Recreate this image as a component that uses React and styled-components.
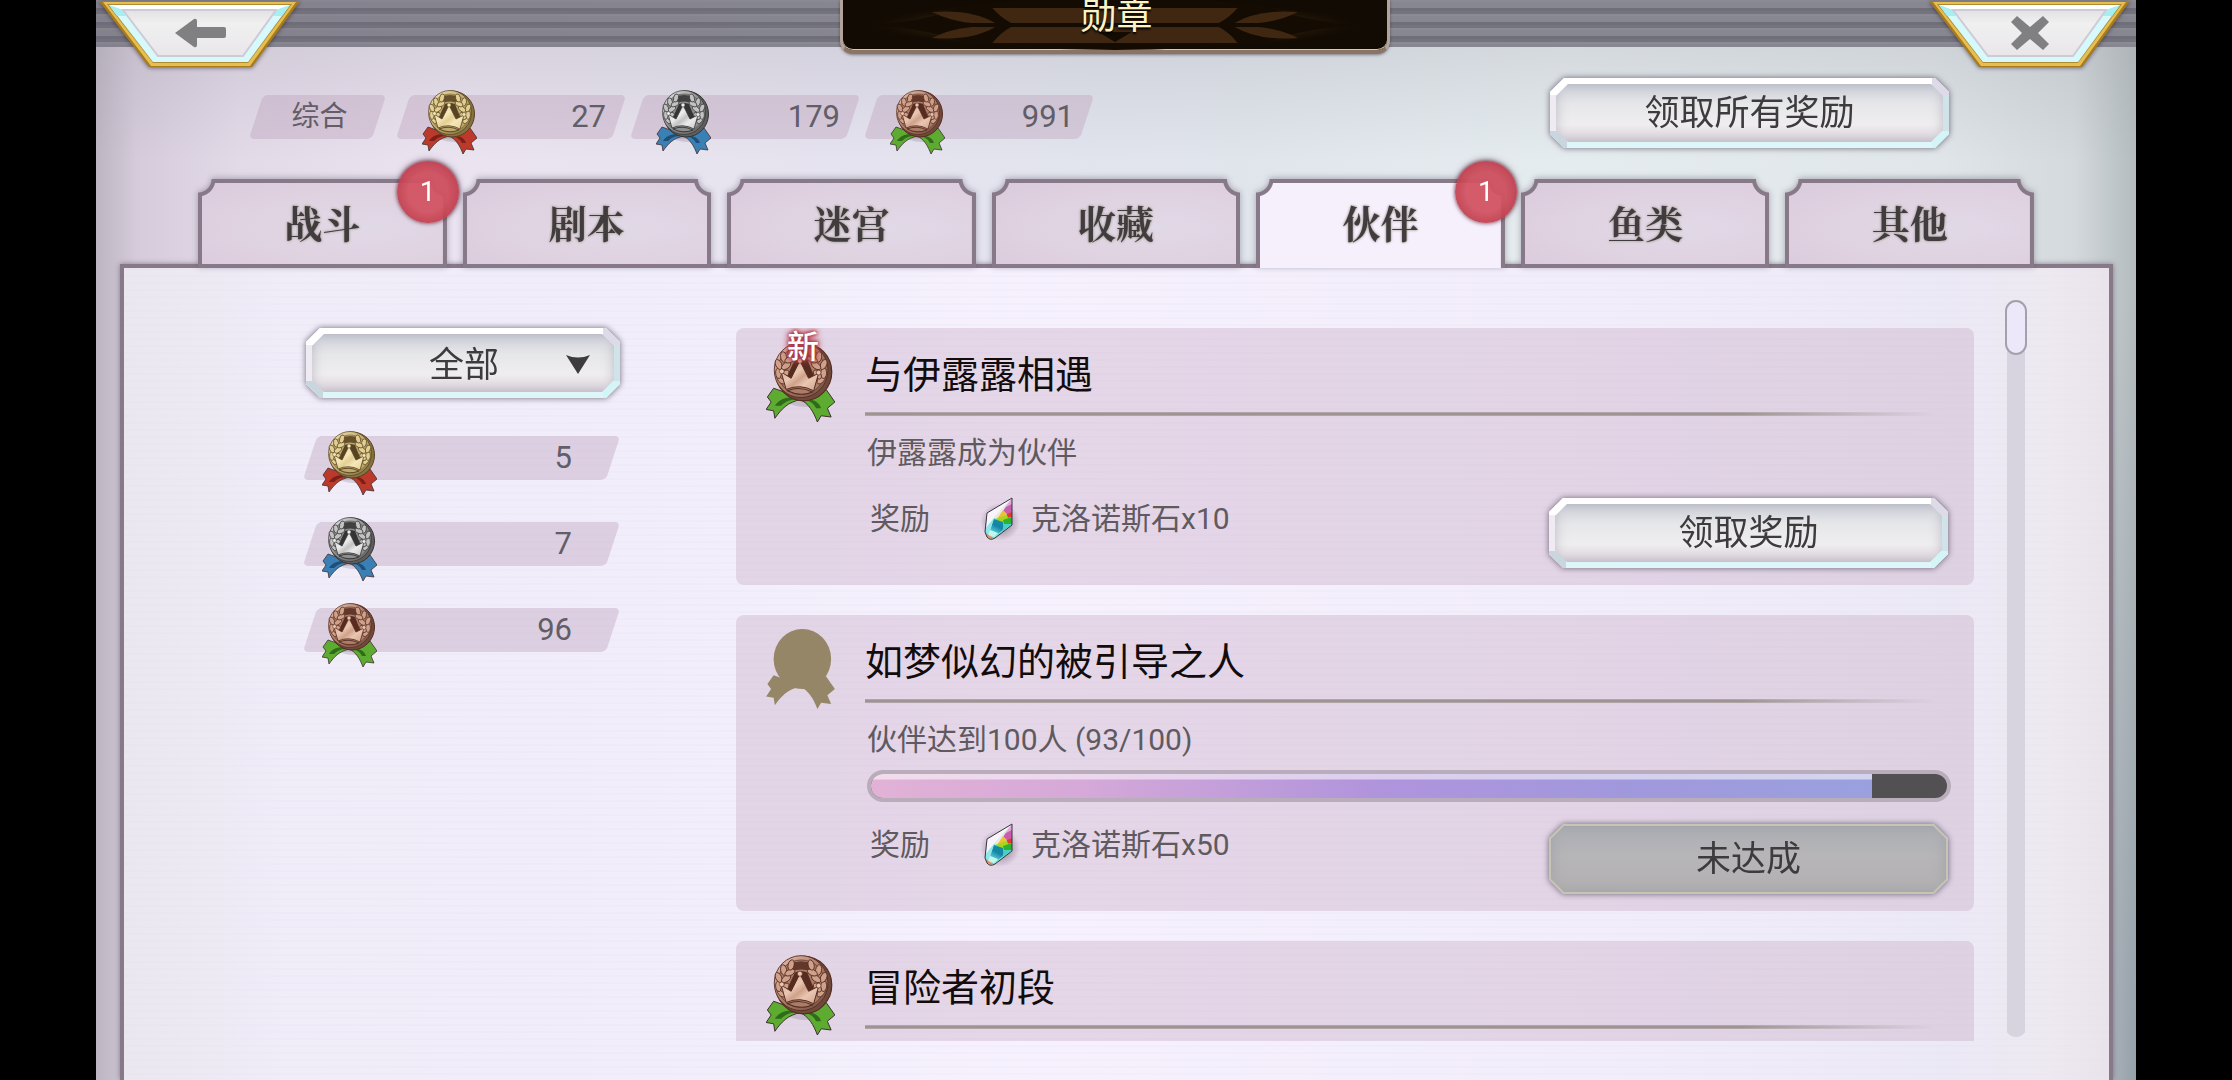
import React, { useId, useState } from "react";
import styled, { createGlobalStyle, css } from "styled-components";

const sans = `Roboto, "Noto Sans CJK SC", sans-serif`;
const serif = `"Noto Serif CJK SC", "Noto Sans CJK SC", serif`;
const edge = "#877987";

const GlobalStyle = createGlobalStyle`
  *, *::before, *::after { box-sizing: border-box; }
  body { margin: 0; background: #000; font-family: ${sans}; color: #5f5b60; }
  button, select { font: inherit; color: inherit; margin: 0; padding: 0; border: 0; background: none; cursor: pointer; }
  h1, h2, p, ul { margin: 0; padding: 0; font-weight: 400; }
  ul { list-style: none; }
`;

const Stage = styled.div`
  height: 100vh;
  margin: 0 96px;
  display: flex;
  flex-direction: column;
  overflow: hidden;
  background:
    radial-gradient(ellipse 60px 800px at 100% 100%, rgba(130, 142, 155, 0.6), transparent),
    linear-gradient(to bottom, rgba(150, 150, 160, 0.22) 47px, transparent 160px),
    linear-gradient(to right, #bdb5c2 0, #d5cbda 2%, #e3dae8 7%, #ebe3f0 17%, #e5e3ef 38%, #e0e5ec 56%, #e5ecef 72%, #e0e6e9 90%, #d3d9dc 97%, #b4bcbf 100%);
`;

const TopBar = styled.header`
  height: 47px;
  flex: none;
  display: flex;
  justify-content: space-between;
  align-items: flex-start;
  padding: 0 6px 0 3px;
  background:
    linear-gradient(to right, rgba(110, 95, 115, 0.14), transparent 50%),
    repeating-linear-gradient(to bottom, #8b8b95 0 2px, #878791 2px 8px, #6f6f7a 8px 11px, #74747e 11px 14px);
`;

const CornerButton = styled.button`
  width: 201px;
  height: 70px;
  filter: drop-shadow(0 1px 2px rgba(40, 30, 50, 0.6));
  svg { display: block; }
`;

const TitlePlate = styled.div`
  position: relative;
  width: 550px;
  height: 54px;
  border: solid #b3a49b;
  border-width: 0 3px 4px;
  border-bottom-color: #8b7462;
  border-radius: 0 0 13px 13px;
  background: #120b03;
  box-shadow: inset 0 -1px 0 #d8c8bc, 0 1px 3px rgba(40, 30, 40, 0.5);
  svg { position: absolute; inset: 0; width: 100%; height: 100%; }
`;

const Title = styled.h1`
  position: relative;
  font-size: 36px;
  line-height: 34px;
  padding-left: 4px;
  text-align: center;
  color: #fbf3c6;
  text-shadow: 0 2px 2px #000;
`;

const Summary = styled.div`
  flex: none;
  height: 132px;
  display: flex;
  justify-content: space-between;
  align-items: center;
  padding: 0 187px 0 153px;
`;

const Totals = styled.div`
  display: flex;
  gap: 4px;
  padding-top: 8px;
`;

const Chip = styled.div`
  position: relative;
  z-index: 0;
  width: ${(p) => p.$width};
  height: 44px;
  display: flex;
  align-items: center;
  justify-content: ${(p) => (p.$label ? "center" : "space-between")};
  margin-right: ${(p) => (p.$label ? "6px" : "0")};
  padding: ${(p) => (p.$label ? "0 0 0 4px" : p.$wide ? "0 48px 0 19px" : "0 20px 0 26px")};
  font-size: ${(p) => (p.$label ? "28px" : "31px")};
  line-height: 44px;
  color: #625d66;
  svg { margin-top: 10px; }
  &::before {
    content: "";
    position: absolute;
    z-index: -1;
    inset: 0 7px;
    border-radius: 5px;
    background: rgba(185, 155, 182, 0.36);
    transform: skewX(-18deg);
  }
`;

/* chamfered, bevelled plate shared by buttons and the filter */
const octagon = (x, y) => `polygon(${x}px 0, calc(100% - ${x}px) 0, 100% ${y}px, 100% calc(100% - ${y}px), calc(100% - ${x}px) 100%, ${x}px 100%, 0 calc(100% - ${y}px), 0 ${y}px)`;

const plate = css`
  position: relative;
  z-index: 0;
  height: 70px;
  font-size: 35px;
  line-height: 72px;
  color: #3d3b3e;
  filter: drop-shadow(0 0 3px rgba(70, 60, 80, 0.75));
  &::before, &::after { content: ""; position: absolute; z-index: -1; }
  &::before {
    inset: 0;
    clip-path: ${octagon(14, 14)};
    background:
      linear-gradient(#fff, #fff) left top / 17px 17px no-repeat,
      linear-gradient(#dedae7, #dedae7) right top / 17px 17px no-repeat,
      linear-gradient(#c9d6de, #c9d6de) left bottom / 17px 17px no-repeat,
      linear-gradient(#d3f5f8, #d3f5f8) right bottom / 17px 17px no-repeat,
      linear-gradient(#f0eaf3, #f0eaf3) left / 8px 100% no-repeat,
      linear-gradient(#cfe3e9, #cfe3e9) right / 8px 100% no-repeat,
      linear-gradient(#fff 50%, #dcf6f9 50%);
  }
  &::after {
    inset: 6px;
    clip-path: ${octagon(12, 12)};
    background: linear-gradient(#cdd0d9, #e6e7e9 35%, #efedef 70%, #dbd3db);
    box-shadow: inset 0 0 12px rgba(150, 145, 165, 0.55);
  }
`;

const PlateButton = styled.button`
  ${plate}
  width: 399px;
  flex: none;
  &:disabled { cursor: default; }
  &:disabled::before { background: #c5c5b5; }
  &:disabled::after {
    inset: 2px;
    clip-path: ${octagon(13, 13)};
    background: linear-gradient(#adafb4, #b6b5b8 45%, #b4b0b2);
    box-shadow: inset 0 0 14px rgba(145, 150, 155, 0.6);
  }
`;

const Filter = styled.label`
  ${plate}
  display: block;
  width: 314px;
  align-self: flex-end;
  margin-bottom: 38px;
  select {
    width: 100%;
    height: 70px;
    padding: 2px 0 0 2px;
    appearance: none;
    text-align-last: center;
    outline: none;
  }
  svg { position: absolute; right: 30px; top: 27px; pointer-events: none; }
`;

const Tabs = styled.nav`
  position: relative;
  z-index: 1;
  flex: none;
  display: flex;
  gap: 16px;
  margin: 0 23px -4px 24px;
  padding: 0 79px 0 78px;
`;

const notch = (at, r) => css`
  mask:
    radial-gradient(circle at -${at}px -${at}px, #0000 ${r}px, #000 ${r + 1}px) left / 51% 100% no-repeat,
    radial-gradient(circle at calc(100% + ${at}px) -${at}px, #0000 ${r}px, #000 ${r + 1}px) right / 51% 100% no-repeat;
`;

const Tab = styled.button`
  position: relative;
  z-index: 0;
  flex: 1;
  height: 89px;
  padding-bottom: 4px;
  font-family: ${serif};
  font-size: 38px;
  font-weight: 700;
  line-height: 85px;
  color: #413d3e;
  text-shadow: 0 0 3px #a39a94, 0 0 2px #b5aca6;
  filter: drop-shadow(0 -1px 3px rgba(80, 70, 90, 0.4));
  &::before, &::after { content: ""; position: absolute; z-index: -1; }
  &::before { inset: 0; background: ${edge}; ${notch(0, 13)} }
  &::after {
    inset: 4px 4px ${(p) => (p.$active ? "0" : "4px")};
    background: ${(p) => (p.$active
      ? "#f5f0fc"
      : "radial-gradient(ellipse at 65% 55%, #e1d9e7, #dfd1e0 60%, #dacbdc)")};
    ${notch(4, 17)}
  }
`;

const Badge = styled.span`
  position: absolute;
  top: -18px;
  right: -12px;
  width: 62px;
  height: 62px;
  border-radius: 50%;
  background: radial-gradient(circle, rgba(210, 82, 96, 0.94) 45%, rgba(194, 64, 80, 0.94) 70%);
  box-shadow: 0 0 4px rgba(90, 20, 40, 0.9);
  font-family: ${sans};
  font-size: 28px;
  font-weight: 400;
  line-height: 62px;
  color: #fff;
  text-shadow: none;
`;

const Panel = styled.main`
  flex: 1;
  min-height: 0;
  margin: 0 23px 0 24px;
  border: 4px solid ${edge};
  border-bottom: 0;
  display: flex;
  padding: 32px 82px 0 179px;
  box-shadow: 0 0 5px rgba(70, 60, 80, 0.55);
  background:
    repeating-linear-gradient(to bottom, rgba(225, 220, 240, 0.16) 0 2px, transparent 2px 7px),
    linear-gradient(to right, #ebe7ef 0, #f0ecf8 8%, #f1edfa 25%, #f6f1fd 45%, #f2edfa 75%, #ece9f6 92%, #eee9f1 97%, #e9e4ea 100%);
`;

const Sidebar = styled.aside`
  flex: none;
  width: 317px;
  margin-right: 116px;
  padding-top: 28px;
  display: flex;
  flex-direction: column;
`;

const Counts = styled.div`
  display: grid;
  gap: 42px;
`;

const List = styled.ul`
  flex: 1;
  min-width: 0;
  margin: 28px 0 39px;
  overflow: hidden;
  display: flex;
  flex-direction: column;
  gap: 30px;
`;

const Card = styled.li`
  flex: none;
  min-height: 257px;
  display: flex;
  padding: 14px 26px 17px 30px;
  border-radius: 8px;
  background: rgba(185, 150, 180, 0.29);
`;

const MedalSlot = styled.div`
  position: relative;
  flex: none;
  width: 99px;
`;

const NewMark = styled.span`
  position: absolute;
  top: -13px;
  left: 21px;
  font-size: 32px;
  font-weight: 500;
  line-height: 36px;
  color: #fff;
  text-shadow: 0 0 3px #a8303c, 0 0 4px #b83844, 0 0 6px #b83844, 0 0 8px #c45a64;
`;

const CardBody = styled.div`
  flex: 1;
  min-width: 0;
  display: flex;
  flex-direction: column;
`;

const CardTitle = styled.h2`
  font-size: 38px;
  line-height: 66px;
  color: #120c0c;
`;

const Rule = styled.div`
  height: 4px;
  margin: 4px 14px 16px 0;
  background: linear-gradient(#b9adb2, #968b89 50%, #b9adb2);
  mask: linear-gradient(to right, #000 82%, transparent);
`;

const Description = styled.p`
  padding-left: 2px;
  font-size: 30px;
  line-height: 42px;
  color: #5f5a60;
`;

const Progress = styled.div`
  height: 32px;
  margin: 9px -3px 0 2px;
  border: 4px solid #b9adbb;
  border-radius: 16px;
  background: #535053;
  overflow: hidden;
`;

const ProgressFill = styled.div`
  height: 100%;
  background:
    linear-gradient(rgba(255, 255, 255, 0.55) 0 5px, transparent 6px),
    linear-gradient(to right, #e2b2d6, #d4a8d8 22%, #b094dc 50%, #a198dc 75%, #9aa0de);
`;

const CardFooter = styled.div`
  margin-top: auto;
  padding-top: 22px;
  display: flex;
  justify-content: space-between;
  align-items: flex-start;
`;

const Reward = styled.p`
  display: flex;
  align-items: center;
  gap: 18px;
  padding-left: 5px;
  font-size: 30px;
  line-height: 38px;
  color: #5f5a60;
  span:first-child { margin-right: 37px; }
`;

const ScrollTrack = styled.div`
  flex: none;
  width: 22px;
  margin: 0 0 43px 31px;
  background: linear-gradient(#d7d4e0, #d7d4e0) center / 18px 100% no-repeat;
  border-radius: 11px;
`;

const ScrollThumb = styled.div`
  height: 55px;
  border: 2px solid #a5a0ac;
  border-radius: 11px;
  background: #ece8fa;
`;

const TONES = {
  gold: { light: "#f6e7b8", leaf: "#e2cf92", mid: "#bfa96c", dark: "#574222", rim: "#85723f", ribbon: "#bb3a2c", fold: "#7c1f18" },
  silver: { light: "#ececec", leaf: "#c2c2c2", mid: "#8f8f8f", dark: "#343434", rim: "#5e5e5e", ribbon: "#3a80b4", fold: "#1e4f78" },
  bronze: { light: "#eac6b2", leaf: "#cfa18a", mid: "#ab7d69", dark: "#562c20", rim: "#6f493c", ribbon: "#5dab30", fold: "#2f6b18" },
};

const LEFT_RIBBON = "M20 42 L6 37 L1 44 L4 48 L0 54 L6 55 L7 61 C12 54 17 48 28 46 Z";
const RIGHT_RIBBON = "M33 43 L48 38 L55 48 L49 53 L52 60 L44 59 L41 64 C38 56 34 49 27 46 Z";
const LEAVES = [
  [12, 30, -40], [10, 25, -5], [15, 26, 40], [10, 18, -25], [16, 19, 55], [14, 12, -10], [19, 14, 65], [20, 8, 15],
];

function Medal({ tone, width = 55 }) {
  const id = useId();
  const height = Math.round((width * 64) / 55);
  if (tone === "locked") {
    return (
      <svg width={width} height={height} viewBox="0 0 55 64" fill="#958667" aria-hidden="true">
        <ellipse cx="29" cy="24" rx="23" ry="24" />
        <path d={LEFT_RIBBON} />
        <path d={RIGHT_RIBBON} />
      </svg>
    );
  }
  const c = TONES[tone];
  return (
    <svg width={width} height={height} viewBox="0 0 55 64" aria-hidden="true">
      <defs>
        <linearGradient id={`${id}d`} x1="0" y1="0" x2="1" y2="1">
          <stop offset="0" stopColor={c.light} />
          <stop offset=".5" stopColor={c.mid} />
          <stop offset="1" stopColor={c.rim} />
        </linearGradient>
        <linearGradient id={`${id}c`} x1="0" y1="0" x2="1" y2="1">
          <stop offset="0" stopColor={c.leaf} />
          <stop offset=".4" stopColor={c.light} />
          <stop offset=".55" stopColor={c.leaf} />
          <stop offset=".7" stopColor={c.light} />
          <stop offset="1" stopColor={c.leaf} />
        </linearGradient>
      </defs>
      <ellipse cx="32" cy="46" rx="16" ry="6" fill="#443848" opacity=".16" />
      <g stroke="#3f3030" strokeWidth=".8" strokeLinejoin="round">
        <path d={LEFT_RIBBON} fill={c.ribbon} />
        <path d={RIGHT_RIBBON} fill={c.ribbon} />
      </g>
      <path d="M25 45 C17 43 10 46 7 51 L12 51 C16 47 20 46 25 46 Z" fill={c.fold} />
      <path d="M30 46 C36 45 42 47 44 53 L40 53 C38 49 35 47 30 46 Z" fill={c.fold} />
      <ellipse cx="30" cy="24" rx="22.500" ry="23" fill={c.rim} stroke={c.dark} strokeWidth="1" />
      <ellipse cx="28" cy="22.500" rx="21.500" ry="22" fill={`url(#${id}d)`} stroke={c.dark} strokeWidth=".7" />
      <circle cx="28" cy="23" r="19" fill={c.mid} stroke={c.rim} strokeWidth=".8" />
      <path d="M19 7 Q28 3 37 7 L36 13 Q28 10 20 13 Z" fill={c.dark} opacity=".85" />
      <path d="M23 14 Q28 12 33 14 L39 29 L16 29 Z" fill={c.dark} />
      <g fill={c.leaf} stroke={c.dark} strokeWidth=".7">
        {LEAVES.map(([x, y, a]) => (
          <ellipse key={`l${x}-${y}`} cx={x} cy={y} rx="2.400" ry="4.200" transform={`rotate(${a} ${x} ${y})`} />
        ))}
        {LEAVES.map(([x, y, a]) => (
          <ellipse key={`r${x}-${y}`} cx={56 - x} cy={y} rx="2.400" ry="4.200" transform={`rotate(${-a} ${56 - x} ${y})`} />
        ))}
      </g>
      <path
        d="M16 38 L12 24 L20 29 L27 15 L34 29 L42 25 L38 39 Q27 33 16 38 Z"
        fill={`url(#${id}c)`} stroke={c.dark} strokeWidth=".8" strokeLinejoin="round"
      />
      <path d="M17 39 Q27 35 37 40 Q27 44 17 39 Z" fill={c.mid} stroke={c.dark} strokeWidth=".9" />
      <g fill={c.light} stroke={c.dark} strokeWidth=".5">
        <circle cx="27" cy="15" r="2" />
        <circle cx="12.500" cy="23.500" r="1.900" />
        <circle cx="42" cy="24.500" r="1.900" />
      </g>
    </svg>
  );
}

function Gem() {
  const id = useId();
  return (
    <svg width="28" height="42" viewBox="0 0 28 42" overflow="visible" aria-hidden="true">
      <defs>
        <linearGradient id={`${id}b`} x1=".8" y1="0" x2=".3" y2="1">
          <stop offset="0" stopColor="#12909c" />
          <stop offset=".5" stopColor="#1483a8" />
          <stop offset="1" stopColor="#5fd8d8" />
        </linearGradient>
        <radialGradient id={`${id}s`}>
          <stop offset="0" stopColor="#5a4a60" stopOpacity=".75" />
          <stop offset=".6" stopColor="#5a4a60" stopOpacity=".3" />
          <stop offset="1" stopColor="#5a4a60" stopOpacity="0" />
        </radialGradient>
      </defs>
      <ellipse cx="15" cy="24" rx="20" ry="19" fill={`url(#${id}s)`} />
      <path d="M27 0 L27 27 L10 40 Q5 43 2 39 L0 34 L2 15 Z" fill="#86e4de" />
      <path d="M27 0 L2 15 L1 30 L9 20 Z" fill="#f8f4fa" />
      <path d="M27 0 L9 20 L13 21 Z" fill="#efe9dc" />
      <path d="M27 0 L27 11 L19 11 Z" fill="#eba3dc" />
      <path d="M21 9 L27 6 L27 16 L22 17 L18 13 Z" fill="#c65fae" />
      <path d="M18 12 L22 16 L17 21 L12 21 Z" fill="#efc03a" />
      <path d="M22 16 L27 14 L27 19 L22 20 Z" fill="#e23c24" />
      <path d="M12 20 L22 17 L24 22 L18 25 L9 23 Z" fill="#a5d51e" />
      <path d="M18 22 L27 19 L27 26 L19 26 Z" fill="#2bb32f" />
      <path d="M9 21 L18 24 L19 31 L13 36 L5 32 Z" fill={`url(#${id}b)`} />
      <path d="M9 20 L1 30 L1 35 L5 33 Z" fill="#8ee6ea" />
      <path d="M19 26 L27 26 L17 34 Z" fill="#48d0c4" />
      <path d="M5 32 L13 35 L9 39 L3 37 Z" fill="#c2f6ef" />
      <path d="M1 35 L5 38 L9 40 Q5 42 2 39 Z" fill="#ec8c58" />
      <path d="M27 0 L27 27 L10 40 Q5 43 2 39 L0 34 L2 15 Z" fill="none" stroke="#3c3440" strokeWidth="1" strokeLinejoin="round" />
    </svg>
  );
}

function CornerArt({ children }) {
  const id = useId();
  return (
    <svg width="201" height="70" viewBox="0 0 201 70" aria-hidden="true">
      <defs>
        <linearGradient id={id} x1="0" y1="0" x2="0" y2="1">
          <stop offset="0" stopColor="#e2e2e4" />
          <stop offset=".3" stopColor="#f0f0f0" />
          <stop offset="1" stopColor="#e9e6ea" />
        </linearGradient>
      </defs>
      <path d="M0 1 H201 L153 67 H50 Z" fill="#a87c1c" />
      <path d="M4 2 H197 L151 66 H52 Z" fill="#e6bf52" />
      <path d="M8 4 H193 L149 63 H54 Z" fill="#b08a30" />
      <path d="M10 5 H191 L149 62 H54 Z" fill="#d6f9fb" />
      <path d="M10 5 H191 L177 10 H24 Z" fill="#fff" />
      <path d="M10 5 L24 10 L27 16 L18 16 Z M191 5 L177 10 L174 16 L183 16 Z" fill="#a5eef2" />
      <path d="M24 10 H177 L144 56 H59 Z" fill={`url(#${id})`} stroke="#d0cad6" strokeWidth="2" />
      {children}
    </svg>
  );
}

function PlateArt() {
  const id = useId();
  const half = (
    <>
      <path d="M151 8 Q160 18 170 23 H275 V8 Z" />
      <path d="M151 43 Q160 32 170 27 H275 V43 Z" />
      <path d="M90 12 Q130 9 154 23 H130 Q108 21 90 12 Z" />
      <path d="M90 38 Q130 41 154 27 H130 Q108 29 90 38 Z" />
    </>
  );
  return (
    <svg viewBox="0 0 550 50" preserveAspectRatio="none" aria-hidden="true">
      <defs>
        <radialGradient id={`${id}g`}>
          <stop offset="0" stopColor="#4a2d12" />
          <stop offset=".7" stopColor="#33200c" />
          <stop offset="1" stopColor="#120b03" stopOpacity="0" />
        </radialGradient>
      </defs>
      <ellipse cx="275" cy="25" rx="255" ry="25" fill={`url(#${id}g)`} />
      <path d="M36 25 Q90 20 125 5 Q200 -4 275 -4 Q350 -4 425 5 Q460 20 514 25 Q460 30 425 43 Q350 50 275 50 Q200 50 125 43 Q90 30 36 25 Z" fill="#140c03" />
      <g fill="#3f2711">
        {half}
        <g transform="translate(550 0) scale(-1 1)">{half}</g>
      </g>
      <path d="M258 32 H292 L275 42 Z" fill="#140c03" />
    </svg>
  );
}

const TABS = [
  { name: "战斗", badge: 1 },
  { name: "剧本" },
  { name: "迷宫" },
  { name: "收藏" },
  { name: "伙伴", badge: 1 },
  { name: "鱼类" },
  { name: "其他" },
];

const TOTALS = [["gold", 27], ["silver", 179], ["bronze", 991]];
const COUNTS = [["gold", 5], ["silver", 7], ["bronze", 96]];

const MEDALS = [
  { tone: "bronze", isNew: true, title: "与伊露露相遇", text: "伊露露成为伙伴", reward: "克洛诺斯石x10", action: "领取奖励" },
  { tone: "locked", title: "如梦似幻的被引导之人", text: "伙伴达到100人 (93/100)", done: 93, goal: 100, reward: "克洛诺斯石x50", action: "未达成", disabled: true },
  { tone: "bronze", title: "冒险者初段" },
];

function MedalCard({ item }) {
  return (
    <Card>
      <MedalSlot>
        <Medal tone={item.tone} width={69} />
        {item.isNew && <NewMark>新</NewMark>}
      </MedalSlot>
      <CardBody>
        <CardTitle>{item.title}</CardTitle>
        <Rule />
        {item.text && <Description>{item.text}</Description>}
        {item.goal && (
          <Progress role="progressbar" aria-valuenow={item.done} aria-valuemax={item.goal}>
            <ProgressFill style={{ width: `${(item.done / item.goal) * 100}%` }} />
          </Progress>
        )}
        {item.reward && (
          <CardFooter>
            <Reward>
              <span>奖励</span>
              <Gem />
              <span>{item.reward}</span>
            </Reward>
            <PlateButton disabled={item.disabled}>{item.action}</PlateButton>
          </CardFooter>
        )}
      </CardBody>
    </Card>
  );
}

export default function App() {
  const [active, setActive] = useState("伙伴");
  return (
    <>
      <GlobalStyle />
      <Stage lang="zh-CN">
        <TopBar>
          <CornerButton aria-label="返回">
            <CornerArt>
              <path d="M76 33 L95 19 Q98 18 98 21 V27 H125 Q127 27 127 29 V36 Q127 38 125 38 H98 V45 Q98 48 95 47 Z" fill="#808082" />
            </CornerArt>
          </CornerButton>
          <TitlePlate>
            <PlateArt />
            <Title>勋章</Title>
          </TitlePlate>
          <CornerButton aria-label="关闭">
            <CornerArt>
              <path d="M88 16 L101 27 L114 16 L120 22 L109 33 L120 44 L114 50 L101 39 L88 50 L82 44 L93 33 L82 22 Z" fill="#808082" />
            </CornerArt>
          </CornerButton>
        </TopBar>

        <Summary>
          <Totals>
            <Chip $label $width="137px">综合</Chip>
            {TOTALS.map(([tone, n]) => (
              <Chip key={tone} $width="230px">
                <Medal tone={tone} />
                <span>{n}</span>
              </Chip>
            ))}
          </Totals>
          <PlateButton>领取所有奖励</PlateButton>
        </Summary>

        <Tabs>
          {TABS.map((t) => (
            <Tab key={t.name} $active={t.name === active} onClick={() => setActive(t.name)}>
              {t.name}
              {t.badge && <Badge>{t.badge}</Badge>}
            </Tab>
          ))}
        </Tabs>

        <Panel>
          <Sidebar>
            <Filter>
              <select aria-label="筛选" defaultValue="全部">
                <option>全部</option>
              </select>
              <svg width="24" height="19" viewBox="0 0 24 19" aria-hidden="true">
                <path d="M0 0 Q12 5 24 0 L12 19 Z" fill="#3d3b3e" />
              </svg>
            </Filter>
            <Counts>
              {COUNTS.map(([tone, n]) => (
                <Chip key={tone} $wide $width="100%">
                  <Medal tone={tone} />
                  <span>{n}</span>
                </Chip>
              ))}
            </Counts>
          </Sidebar>
          <List>
            {MEDALS.map((m) => <MedalCard key={m.title} item={m} />)}
          </List>
          <ScrollTrack>
            <ScrollThumb />
          </ScrollTrack>
        </Panel>
      </Stage>
    </>
  );
}
